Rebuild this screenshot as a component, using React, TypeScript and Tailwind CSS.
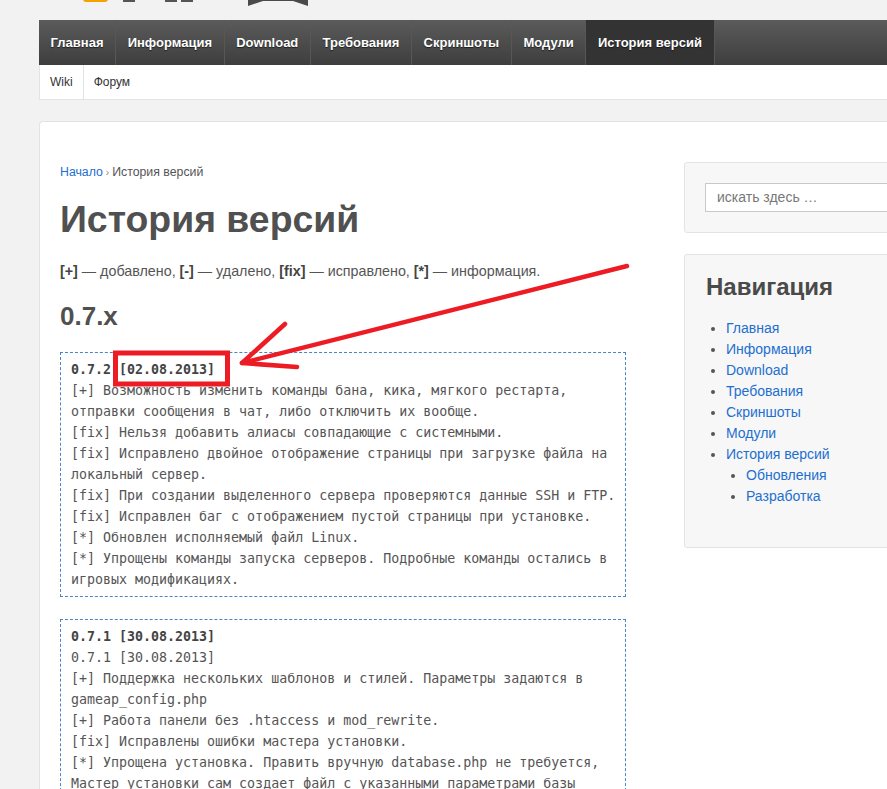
const navItems = ["Главная", "Информация", "Download", "Требования", "Скриншоты", "Модули", "История версий"];

const release072 = [
  "[+] Возможность изменить команды бана, кика, мягкого рестарта,",
  "отправки сообщения в чат, либо отключить их вообще.",
  "[fix] Нельзя добавить алиасы совпадающие с системными.",
  "[fix] Исправлено двойное отображение страницы при загрузке файла на",
  "локальный сервер.",
  "[fix] При создании выделенного сервера проверяются данные SSH и FTP.",
  "[fix] Исправлен баг с отображением пустой страницы при установке.",
  "[*] Обновлен исполняемый файл Linux.",
  "[*] Упрощены команды запуска серверов. Подробные команды остались в",
  "игровых модификациях.",
];

const release071 = [
  "0.7.1 [30.08.2013]",
  "[+] Поддержка нескольких шаблонов и стилей. Параметры задаются в",
  "gameap_config.php",
  "[+] Работа панели без .htaccess и mod_rewrite.",
  "[fix] Исправлены ошибки мастера установки.",
  "[*] Упрощена установка. Править вручную database.php не требуется,",
  "Мастер установки сам создает файл с указанными параметрами базы",
];

const sideNav = ["Главная", "Информация", "Download", "Требования", "Скриншоты", "Модули"];

function ReleaseBlock({ title, lines }: { title: string; lines: string[] }) {
  return (
    <div className="border border-dashed border-[#4b84c4] px-[10px] py-[6px] font-['DejaVu_Sans_Mono',monospace] text-[13.3px] leading-[21px] text-[#555]">
      <div className="whitespace-pre font-bold text-[#444]">{title}</div>
      {lines.map((line, i) => (
        <div key={i} className="whitespace-pre">
          {line}
        </div>
      ))}
    </div>
  );
}

export default function App() {
  return (
    <div className="relative h-[789px] w-[887px] overflow-hidden bg-[#f2f2f2] font-['Liberation_Sans',Arial,sans-serif] text-[#555]">
      {/* logo fragment cut off at the top edge */}
      <svg width="887" height="20" className="block">
        <rect x="83" y="-5" width="25" height="7" rx="3" fill="#f5a200" />
        <rect x="123" y="0" width="12" height="2" fill="#555" />
        <rect x="165" y="0" width="12" height="2" fill="#555" />
        <rect x="181" y="0" width="12" height="2" fill="#555" />
        <polygon points="248,0 308,0 308,6 293,1 263,1 248,6" fill="#4a4a4a" />
      </svg>

      <div className="ml-[39px] w-[1000px]">
        <nav className="flex h-[45px] bg-gradient-to-b from-[#5b5b5b] to-[#3e3e3e]">
          {navItems.map((item, i) => (
            <div
              key={item}
              className={
                "flex items-center border-r border-[#575757] px-[11.6px] text-[13px] font-bold text-white [text-shadow:0_1px_1px_rgba(0,0,0,0.6)] " +
                (i === navItems.length - 1 ? "bg-[#333]" : "")
              }
            >
              {item}
            </div>
          ))}
        </nav>
        <div className="flex h-[35px] border-b border-l border-[#e3e3e3] bg-white text-[12px] text-[#333]">
          <div className="flex items-center border-r border-[#e3e3e3] px-[10px]">Wiki</div>
          <div className="flex items-center px-[10px]">Форум</div>
        </div>

        <div className="mt-[21px] flex h-[700px] gap-[58px] rounded-tl-[4px] border-l border-t border-[#e3e3e3] bg-white pl-[20px] pt-[40px]">
          <main className="w-[566px] shrink-0">
            <div className="text-[12.3px] leading-[20px]">
              <span className="text-[#1e6fcf]">Начало</span>
              <span className="mx-[3px] text-[10px] text-[#888]">›</span>
              <span className="text-[#555]">История версий</span>
            </div>
            <h1 className="mt-[12px] text-[37.4px] font-bold leading-[48px] text-[#505050]">История версий</h1>
            <p className="mt-[18px] text-[14.3px] leading-[20px]">
              <b className="text-[#444]">[+]</b> — добавлено, <b className="text-[#444]">[-]</b> — удалено,{" "}
              <b className="text-[#444]">[fix]</b> — исправлено, <b className="text-[#444]">[*]</b> — информация.
            </p>
            <h2 className="mt-[18px] text-[26px] font-bold leading-[34px] text-[#505050]">0.7.x</h2>
            <div className="mt-[19px]">
              <ReleaseBlock title="0.7.2 [02.08.2013]" lines={release072} />
            </div>
            <div className="mt-[22px]">
              <ReleaseBlock title="0.7.1 [30.08.2013]" lines={release071} />
            </div>
          </main>

          <aside className="w-[300px] shrink-0">
            <div className="rounded-[3px] border border-[#e3e3e3] bg-[#f7f7f7] p-[20px]">
              <div className="flex h-[29px] items-center border border-[#c8c8c8] bg-white px-[11px] text-[14px] text-[#777]">
                искать здесь …
              </div>
            </div>
            <div className="mt-[21px] h-[294px] rounded-[3px] border border-[#e3e3e3] bg-[#f7f7f7] px-[21px] pt-[18px]">
              <h3 className="text-[24px] font-bold leading-[28px] text-[#4a4a4a]">Навигация</h3>
              <ul className="mt-[17px] list-disc pl-[20px] text-[14px] leading-[21px] text-[#1e6fcf] marker:text-[#555]">
                {sideNav.map((item) => (
                  <li key={item}>{item}</li>
                ))}
                <li>
                  История версий
                  <ul className="list-disc pl-[20px] marker:text-[#555]">
                    <li>Обновления</li>
                    <li>Разработка</li>
                  </ul>
                </li>
              </ul>
            </div>
          </aside>
        </div>
      </div>

      {/* red hand-drawn annotation over the page */}
      <svg width="887" height="789" className="pointer-events-none absolute inset-0">
        <rect x="115.5" y="353" width="112" height="31" fill="none" stroke="#ed1c24" strokeWidth="5" />
        <g fill="none" stroke="#ed1c24" strokeWidth="4.5" strokeLinecap="round" strokeLinejoin="round">
          <path d="M627 266 L242 363" />
          <path d="M285 324 L242 363 L297 367" />
        </g>
      </svg>
    </div>
  );
}
